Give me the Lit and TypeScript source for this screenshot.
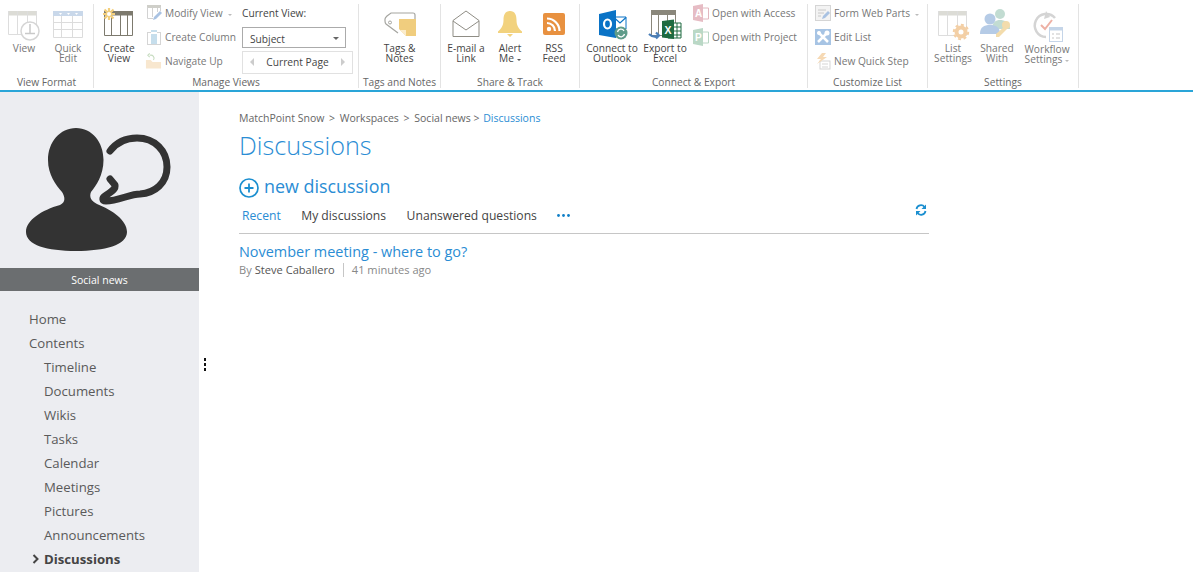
import { LitElement, html, svg, css } from "lit";
import { customElement } from "lit/decorators.js";

const tableLines = (x: number, y: number, w: number, h: number, cols: number[], head: string, line: string) => svg`
    <rect x="${x}" y="${y}" width="${w}" height="4.5" fill="${head}"/>
    <path d="M${x + 0.5} ${y} V${y + h - 0.5} H${x + w - 0.5} V${y} ${cols.map((c) => `M${c + 0.5} ${y} V${y + h}`).join(" ")}" fill="none" stroke="${line}"/>
`;

const ICONS: Record<string, unknown> = {
    view: svg`<svg width="34" height="32" viewBox="0 -2 34 32">${tableLines(1, 1, 29, 24, [10, 20], "#dcdcd6", "#dddddd")}
        <circle cx="23" cy="21" r="9" fill="#fff" stroke="#d5d5d5" stroke-width="1.5"/><path d="M23 14v9M18 23.5h10" stroke="#c9c9c9" stroke-width="1.5" fill="none"/></svg>`,
    quick: svg`<svg width="32" height="32" viewBox="0 -2 32 32"><rect x="1" y="1" width="30" height="5" fill="#c9d8ea"/>
        <path d="M1.5 6V27.5H30.5V6M1.5 12.5H30.5M1.5 19.5H30.5M9.5 6V27.5M20.5 6V27.5" fill="none" stroke="#dcdcdc"/>
        <path d="M15 3h3l-1.500 2zM23 3h3l-1.500 2zM7 3h3l-1.500 2z" fill="#fff"/></svg>`,
    create: svg`<svg width="34" height="32" viewBox="1 1 34 32">${tableLines(3, 4, 29, 25, [10, 19, 26], "#7d7a6e", "#7d7a6e")}
        <g stroke="#f3cf7c" stroke-width="2.200"><path d="M8 1v12M2 7h12M3.500 2.500l9 9M12.500 2.500l-9 9"/></g><circle cx="8" cy="7" r="2" fill="#fff"/></svg>`,
    tags: svg`<svg width="34" height="30" viewBox="0 0 34 30"><path d="M13 3H30Q32 3 32 5V9M15 23 3 14Q2 13 2 11V9Q2 8 4 6L8 3H13" fill="none" stroke="#a5a5a0" stroke-width="1.200"/>
        <circle cx="7" cy="12.500" r="1.500" fill="none" stroke="#a5a5a0"/><path d="M16 9H33V26H23L16 19Z" fill="#f0cd7e"/><path d="M17 20h6v6z" fill="#fbeccb"/></svg>`,
    mail: svg`<svg width="28" height="30" viewBox="0 0 28 30"><path d="M1 26.500V10.500L14 1 27 10.500V26.500ZM1 11 14 20 27 11" fill="none" stroke="#8f8d85" stroke-width="1"/></svg>`,
    bell: svg`<svg width="26" height="30" viewBox="0 0 26 30"><path d="M13 1C8 1 6.500 5 6.500 10C6.500 16 4 19 1 21.500V23H25V21.500C22 19 19.500 16 19.500 10C19.500 5 18 1 13 1ZM10 24h6l-3 3z" fill="#f2d27e"/></svg>`,
    rss: svg`<svg width="24" height="28" viewBox="0 0 24 28"><rect width="22" height="22" x="1" y="1" rx="2" fill="#e89140"/>
        <circle cx="7" cy="17" r="2.200" fill="#fff"/><path d="M5 11A8 8 0 0 1 13 19M5 6.500A12.500 12.500 0 0 1 17.500 19" fill="none" stroke="#fff" stroke-width="2.200"/></svg>`,
    outlook: svg`<svg width="32" height="32" viewBox="-2 -1 32 32"><path d="M16 8H28V20H16Z" fill="#fff" stroke="#0a73c6"/><path d="M16 8.500L22 14 28 8.500" fill="none" stroke="#0a73c6" stroke-width="1.200"/>
        <path d="M1 5 18 1V29L1 26Z" fill="#0a73c6"/><ellipse cx="9.500" cy="15" rx="3.500" ry="4.500" fill="none" stroke="#fff" stroke-width="2.200"/>
        <circle cx="23" cy="24" r="6.500" fill="#5f9c8a"/><path d="M19.500 23A3.500 3.500 0 0 1 26 22M26.500 25A3.500 3.500 0 0 1 20 26" fill="none" stroke="#fff" stroke-width="1.300"/></svg>`,
    excel: svg`<svg width="34" height="32" viewBox="0 -2 34 32">${tableLines(3, 0, 25, 26, [10, 19], "#8a877b", "#8a877b")}
        <rect x="3" y="0" width="25" height="5" fill="#8a877b"/><path d="M20 13H33V28H20Z" fill="#fff" stroke="#1e6b41"/><path d="M26 17h7M26 21h7M26 25h7M29 13v15" stroke="#1e6b41"/>
        <path d="M14 11 26 9.500V29L14 27.500Z" fill="#1e6b41"/><text x="16.500" y="23.500" font-family="Liberation Sans" font-size="10.500" font-weight="700" fill="#fff">X</text>
        <path d="M1 24C4 27 7 27 10 26M8 22.500l3 3-3 3" fill="none" stroke="#4a7eb8" stroke-width="2.200"/></svg>`,
    listSet: svg`<svg width="34" height="32" viewBox="-1 -2 34 32">${tableLines(1, 1, 29, 25, [10, 20], "#dcdcd6", "#dddddd")}
        <circle cx="24" cy="22" r="4.500" fill="none" stroke="#f3cfa5" stroke-width="4"/><circle cx="24" cy="22" r="7.200" fill="none" stroke="#f3cfa5" stroke-width="2" stroke-dasharray="3 2.600"/></svg>`,
    shared: svg`<svg width="34" height="32" viewBox="0 1 34 32" opacity="0.85"><circle cx="20" cy="7" r="5" fill="#b8d7cb"/><path d="M12 22C12 15 16 13 20 13S30 15 30 22Z" fill="#b8d7cb"/>
        <circle cx="10" cy="12" r="5.500" fill="#a9c2e2"/><path d="M0 27C0 20 4 18 10 18S20 20 20 27Z" fill="#a9c2e2"/>
        <circle cx="26" cy="18" r="4" fill="#f1d79e"/><path d="M24 20 16 27v3h3l8-8" fill="#f1d79e"/></svg>`,
    workflow: svg`<svg width="32" height="32" viewBox="-1 -2 32 32"><path d="M14 26A11.500 11.500 0 1 1 23 7" fill="none" stroke="#d4d4d4" stroke-width="2.500"/><path d="M14 0l4 6-6 2z" fill="#d4d4d4"/>
        <path d="M9 14l4 4 7-9" fill="none" stroke="#eeb1a5" stroke-width="2"/><rect x="17.500" y="16.500" width="13" height="14" fill="#fff" stroke="#c5d5e8"/><rect x="17.500" y="16.500" width="13" height="3" fill="#c5d5e8"/>
        <path d="M20 23h2M24 23h4M20 27h2M24 27h4" stroke="#c5c5c5"/></svg>`,
    modify: svg`<svg width="16" height="16" viewBox="0 0 16 16"><path d="M1 1.500H15" stroke="#cfcfc9" stroke-width="3"/><path d="M1.500 2V13.500H7M6.500 3V12M11.500 3V7M14.500 2V6" fill="none" stroke="#d2d2d2"/><path d="M7 15l1-3 6-6 2 2-6 6z" fill="#a9c2e2"/></svg>`,
    column: svg`<svg width="16" height="16" viewBox="0 0 16 16"><rect x="1.500" y="3.500" width="13" height="12" fill="none" stroke="#d5d5d5"/><rect x="5" y="1" width="6" height="14" fill="#c6deec"/><rect x="5" y="3" width="6" height="2" fill="#fff"/></svg>`,
    navUp: svg`<svg width="18" height="18" viewBox="0 0 18 18"><path d="M1 17V8H6L8 10H17V17Z" fill="#f8e7cf"/><path d="M9 8C11 5 8 2 5 3M5 1 3 3l2 2" fill="none" stroke="#c7dcc0" stroke-width="1.200"/></svg>`,
    access: svg`<svg width="16" height="18" viewBox="0 0 16 18"><path d="M8 4H15.500V15H8Z" fill="#fff" stroke="#e2b8bf"/><path d="M0 2 10 0V18L0 16Z" fill="#e6bcc4"/><text x="2" y="13" font-family="Liberation Sans" font-size="10" font-weight="700" fill="#fff">A</text></svg>`,
    project: svg`<svg width="16" height="18" viewBox="0 0 16 18"><path d="M8 4H15.500V15H8Z" fill="#fff" stroke="#b9d6c4"/><path d="M0 2 10 0V18L0 16Z" fill="#bad8c6"/><text x="2" y="13" font-family="Liberation Sans" font-size="10" font-weight="700" fill="#fff">P</text></svg>`,
    webParts: svg`<svg width="16" height="16" viewBox="0 0 16 16"><rect x="0.500" y="0.500" width="15" height="15" fill="#f3f3f3" stroke="#d5d5d5"/><path d="M3 5h8M3 8h6M3 11h3" stroke="#c8c8c8"/><path d="M7 14l1-3 5-5 2 2-5 5z" fill="#a9c2e2"/></svg>`,
    editList: svg`<svg width="16" height="16" viewBox="0 0 16 16"><rect width="16" height="16" fill="#a7c4e4"/><path d="M3 13 13 3M3 3l10 10" stroke="#fff" stroke-width="2.500"/><circle cx="12" cy="4" r="2.500" fill="#fff"/><circle cx="4" cy="4" r="2" fill="#fff"/></svg>`,
    quickStep: svg`<svg width="16" height="18" viewBox="0 0 16 18"><rect x="5" y="9" width="10" height="8" fill="none" stroke="#d5d5d5"/><path d="M7 12h6M7 15h6" stroke="#d5d5d5"/><path d="M7 1 2 7h4l-4 5 10-7H8l3-4z" fill="#f6d9b4"/></svg>`,
};

type Big = { icon: string; lines: string[]; width: number; pale?: boolean; arrow?: boolean; low?: boolean };
type Small = { icon: string; label: string; arrow?: boolean };

@customElement("app-root")
export class AppRoot extends LitElement {
    static override styles = css`
        :host {
            display: block;
            height: 572px;
            overflow: hidden;
            position: relative;
            background: #fff;
            font-family: "Open Sans", sans-serif;
            color: #444;
        }

        .ribbon {
            display: flex;
            height: 90px;
            border-bottom: 2px solid #2aa5d8;
        }
        .group {
            display: flex;
            flex-direction: column;
            box-sizing: border-box;
            margin-top: 4px;
            height: 84px;
            border-right: 1px solid #e3e3e3;
        }
        .group-body {
            flex: none;
            height: 71px;
            display: flex;
        }
        .group-label {
            height: 13px;
            text-align: center;
            font-size: 10.200px;
            color: #666;
            line-height: 14px;
            white-space: nowrap;
        }

        .big {
            display: flex;
            flex-direction: column;
            align-items: center;
            font-size: 10.200px;
            line-height: 10px;
            text-align: center;
            white-space: nowrap;
        }
        .big.pale { color: #777; }
        .big .ico {
            height: 39px;
            flex: none;
            display: flex;
            align-items: flex-end;
            justify-content: center;
            padding-bottom: 3px;
            box-sizing: border-box;
        }
        .big.low .ico { height: 40px; }
        .big svg { overflow: visible; }
        .small-col {
            display: flex;
            flex-direction: column;
            margin-top: -3px;
        }
        .small {
            display: flex;
            align-items: center;
            gap: 3px;
            height: 24px;
            font-size: 10.200px;
            color: #777;
            white-space: nowrap;
        }
        .small .ico {
            width: 17px;
            display: flex;
            justify-content: center;
        }
        .arrow {
            display: inline-block;
            width: 0;
            height: 0;
            margin-left: 3px;
            vertical-align: 1px;
            border: 2.500px solid transparent;
            border-top-color: #bbb;
            border-bottom: 0;
        }
        .small .arrow { margin-left: 5px; }
        .big .arrow.dark { border-top-color: #555; }

        .current {
            display: flex;
            flex-direction: column;
            width: 111px;
            font-size: 10.200px;
        }
        .current-title { height: 23px; line-height: 18px; }
        .select {
            width: 104px;
            height: 21px;
            box-sizing: border-box;
            border: 1px solid #ababab;
            display: flex;
            align-items: center;
            justify-content: space-between;
            padding: 2px 6px 0 7px;
            margin-bottom: 3px;
        }
        .select i {
            border: 3px solid transparent;
            border-top-color: #666;
            border-bottom: 0;
        }
        .pager {
            height: 23px;
            box-sizing: border-box;
            border: 1px solid #e1e1e1;
            display: flex;
            align-items: center;
            justify-content: space-between;
            padding: 0 7px 1px;
        }
        .pager i {
            border: 4px solid transparent;
        }
        .pager i.left { border-right-color: #ccc; border-left: 0; }
        .pager i.right { border-left-color: #ccc; border-right: 0; }

        .page {
            display: flex;
            height: 480px;
        }
        .side {
            width: 199px;
            background: #ecedf1;
            flex: none;
        }
        .side svg { display: block; }
        .side-title {
            height: 23px;
            line-height: 25px;
            background: #6b6e70;
            color: #fff;
            text-align: center;
            font-size: 10.500px;
        }
        .nav {
            list-style: none;
            margin: 0;
            padding: 16px 0 0 29px;
            font-size: 13.200px;
            line-height: 24px;
            color: #5a5a5a;
        }
        .nav .sub { padding-left: 15px; }
        .nav .cur {
            position: relative;
            font-weight: 700;
            color: #444;
        }
        .nav .cur svg {
            position: absolute;
            left: 3px;
            top: 7px;
        }

        .main {
            padding: 19px 0 0 40px;
            width: 690px;
        }
        .crumbs {
            font-size: 10.500px;
            line-height: 14px;
            color: #666;
            white-space: nowrap;
        }
        .crumbs span { margin: 0 2px; }
        .crumbs span:last-of-type { margin-left: 0; }
        .crumbs b { font-weight: 400; color: #2a8dd4; margin-left: -1px; }
        h1 {
            margin: 2px 0 0;
            font-size: 25.200px;
            line-height: 36px;
            font-weight: 300;
            color: #2a8dd4;
        }
        .new {
            display: flex;
            align-items: center;
            gap: 5px;
            margin-top: 12px;
            height: 24px;
            font-size: 17.900px;
            color: #2a8dd4;
        }
        .new svg { margin-top: 2px; }
        .new span { margin-top: -2px; }
        .tabs {
            display: flex;
            align-items: center;
            height: 32px;
            padding: 0 0 2px 3px;
            border-bottom: 1px solid #c6c6c6;
            font-size: 12.150px;
            position: relative;
        }
        .tabs span { margin-right: 20.500px; }
        .tabs .on { color: #2a8dd4; }
        .tabs .dots { display: block; width: 13px; height: 3px; margin-top: 1px; }
        .tabs .refresh { position: absolute; right: 2px; top: 5px; }
        .item-title {
            margin-top: 9px;
            font-size: 14.450px;
            line-height: 18px;
            color: #2a8dd4;
        }
        .meta {
            display: flex;
            align-items: center;
            font-size: 11.100px;
            line-height: 14px;
            color: #888;
            margin-top: 2px;
        }
        .meta em { font-style: normal; color: #555; margin-left: 3px; }
        .meta i {
            width: 1px;
            height: 14px;
            background: #c6c6c6;
            margin: 0 8px;
        }

        .splitter {
            position: absolute;
            left: 204px;
            top: 358px;
            display: flex;
            flex-direction: column;
            gap: 2px;
        }
        .splitter i {
            width: 2px;
            height: 3px;
            background: #111;
        }
    `;

    private big(b: Big) {
        return html`
            <div class="big ${b.pale ? "pale" : ""} ${b.low ? "low" : ""}" style="width:${b.width}px">
                <div class="ico">${ICONS[b.icon]}</div>
                ${b.lines.map((l, i) => html`<div>${l}${b.arrow && i === b.lines.length - 1 ? html`<span class="arrow ${b.pale ? "" : "dark"}"></span>` : ""}</div>`)}
            </div>
        `;
    }

    private small(s: Small) {
        return html`
            <div class="small">
                <div class="ico">${ICONS[s.icon]}</div>
                <span>${s.label}${s.arrow ? html`<span class="arrow"></span>` : ""}</span>
            </div>
        `;
    }

    private group(label: string, width: number, pad: number, body: unknown) {
        return html`
            <div class="group" style="width:${width}px">
                <div class="group-body" style="padding-left:${pad}px">${body}</div>
                <div class="group-label">${label}</div>
            </div>
        `;
    }

    private renderRibbon() {
        return html`
            <div class="ribbon">
                ${this.group("View Format", 94, 2, html`
                    ${this.big({ icon: "view", lines: ["View"], width: 44, pale: true })}
                    ${this.big({ icon: "quick", lines: ["Quick", "Edit"], width: 44, pale: true })}
                `)}
                ${this.group("Manage Views", 265, 0, html`
                    ${this.big({ icon: "create", lines: ["Create", "View"], width: 50 })}
                    <div class="small-col" style="width:98px;padding-left:1px;box-sizing:border-box">
                        ${this.small({ icon: "modify", label: "Modify View", arrow: true })}
                        ${this.small({ icon: "column", label: "Create Column" })}
                        ${this.small({ icon: "navUp", label: "Navigate Up" })}
                    </div>
                    <div class="current">
                        <div class="current-title">Current View:</div>
                        <div class="select"><span>Subject</span><i></i></div>
                        <div class="pager"><i class="left"></i><span>Current Page</span><i class="right"></i></div>
                    </div>
                `)}
                ${this.group("Tags and Notes", 82, 0, html`
                    ${this.big({ icon: "tags", lines: ["Tags &", "Notes"], width: 81 })}
                `)}
                ${this.group("Share & Track", 139, 3, html`
                    ${this.big({ icon: "mail", lines: ["E-mail a", "Link"], width: 44 })}
                    ${this.big({ icon: "bell", lines: ["Alert", "Me"], width: 44, arrow: true })}
                    ${this.big({ icon: "rss", lines: ["RSS", "Feed"], width: 44 })}
                `)}
                ${this.group("Connect & Export", 228, 0, html`
                    ${this.big({ icon: "outlook", lines: ["Connect to", "Outlook"], width: 64 })}
                    ${this.big({ icon: "excel", lines: ["Export to", "Excel"], width: 42 })}
                    <div class="small-col" style="padding-left:6px">
                        ${this.small({ icon: "access", label: "Open with Access" })}
                        ${this.small({ icon: "project", label: "Open with Project" })}
                    </div>
                `)}
                ${this.group("Customize List", 120, 6, html`
                    <div class="small-col">
                        ${this.small({ icon: "webParts", label: "Form Web Parts", arrow: true })}
                        ${this.small({ icon: "editList", label: "Edit List" })}
                        ${this.small({ icon: "quickStep", label: "New Quick Step" })}
                    </div>
                `)}
                ${this.group("Settings", 151, 3, html`
                    ${this.big({ icon: "listSet", lines: ["List", "Settings"], width: 44, pale: true })}
                    ${this.big({ icon: "shared", lines: ["Shared", "With"], width: 44, pale: true })}
                    ${this.big({ icon: "workflow", lines: ["Workflow", "Settings"], width: 56, pale: true, arrow: true, low: true })}
                `)}
            </div>
        `;
    }

    private renderSide() {
        const items = ["Timeline", "Documents", "Wikis", "Tasks", "Calendar", "Meetings", "Pictures", "Announcements"];
        return html`
            <div class="side">
                <svg width="199" height="176" viewBox="0 92 199 176">
                    <path fill="#333" d="M76 128C92 128 103.500 142 103.500 160C103.500 175 96 186 91 192C89 197 91 201 97 204C112 210 127 220 127 232C127 245 105 251 76 251C47 251 26 245 26 232C26 220 42 210 60 205C66 202 65 197 62 192C56 185 48 175 48 160C48 142 60 128 76 128Z"/>
                    <path fill="none" stroke="#333" stroke-width="7" stroke-linecap="round" stroke-linejoin="round" d="M110 151C116 143 126 138 137 138C155 138 167 151 167 167C167 183 155 193 140 194C130 194 118 201 106 201C102 201 102 198 105 196C111 192 116 189 115 185L110 179"/>
                </svg>
                <div class="side-title">Social news</div>
                <ul class="nav">
                    <li>Home</li>
                    <li>Contents</li>
                    ${items.map((i) => html`<li class="sub">${i}</li>`)}
                    <li class="sub cur">
                        <svg width="8" height="10" viewBox="0 0 8 10"><path d="M1.500 1 5.500 5 1.500 9" fill="none" stroke="#444" stroke-width="2"/></svg>
                        Discussions
                    </li>
                </ul>
            </div>
        `;
    }

    private renderMain() {
        return html`
            <div class="main">
                <div class="crumbs">MatchPoint Snow <span>&gt;</span> Workspaces <span>&gt;</span> Social news <span>&gt;</span> <b>Discussions</b></div>
                <h1>Discussions</h1>
                <div class="new">
                    <svg width="20" height="20" viewBox="0 0 20 20"><circle cx="10" cy="10" r="9" fill="none" stroke="#1b8fd0" stroke-width="1.700"/><path d="M10 5.500v9M5.500 10h9" stroke="#1b8fd0" stroke-width="1.800"/></svg>
                    <span>new discussion</span>
                </div>
                <div class="tabs">
                    <span class="on">Recent</span>
                    <span>My discussions</span>
                    <span>Unanswered questions</span>
                    <svg class="dots" viewBox="0 0 13 3"><circle cx="1.500" cy="1.500" r="1.400" fill="#0f7fc8"/><circle cx="6.500" cy="1.500" r="1.400" fill="#0f7fc8"/><circle cx="11.500" cy="1.500" r="1.400" fill="#0f7fc8"/></svg>
                    <svg class="refresh" width="12" height="12" viewBox="0 0 12 12"><path d="M1.500 5A4.500 4.500 0 0 1 9.500 3M10.500 7A4.500 4.500 0 0 1 2.500 9" fill="none" stroke="#1b8fd0" stroke-width="1.800"/><path d="M11 0.500V5H6.500ZM1 11.500V7H5.500Z" fill="#1b8fd0"/></svg>
                </div>
                <div class="item-title">November meeting - where to go?</div>
                <div class="meta">By<em>Steve Caballero</em><i></i>41 minutes ago</div>
            </div>
        `;
    }

    override render() {
        return html`
            ${this.renderRibbon()}
            <div class="page">
                ${this.renderSide()}
                ${this.renderMain()}
            </div>
            <div class="splitter"><i></i><i></i><i></i></div>
        `;
    }
}
